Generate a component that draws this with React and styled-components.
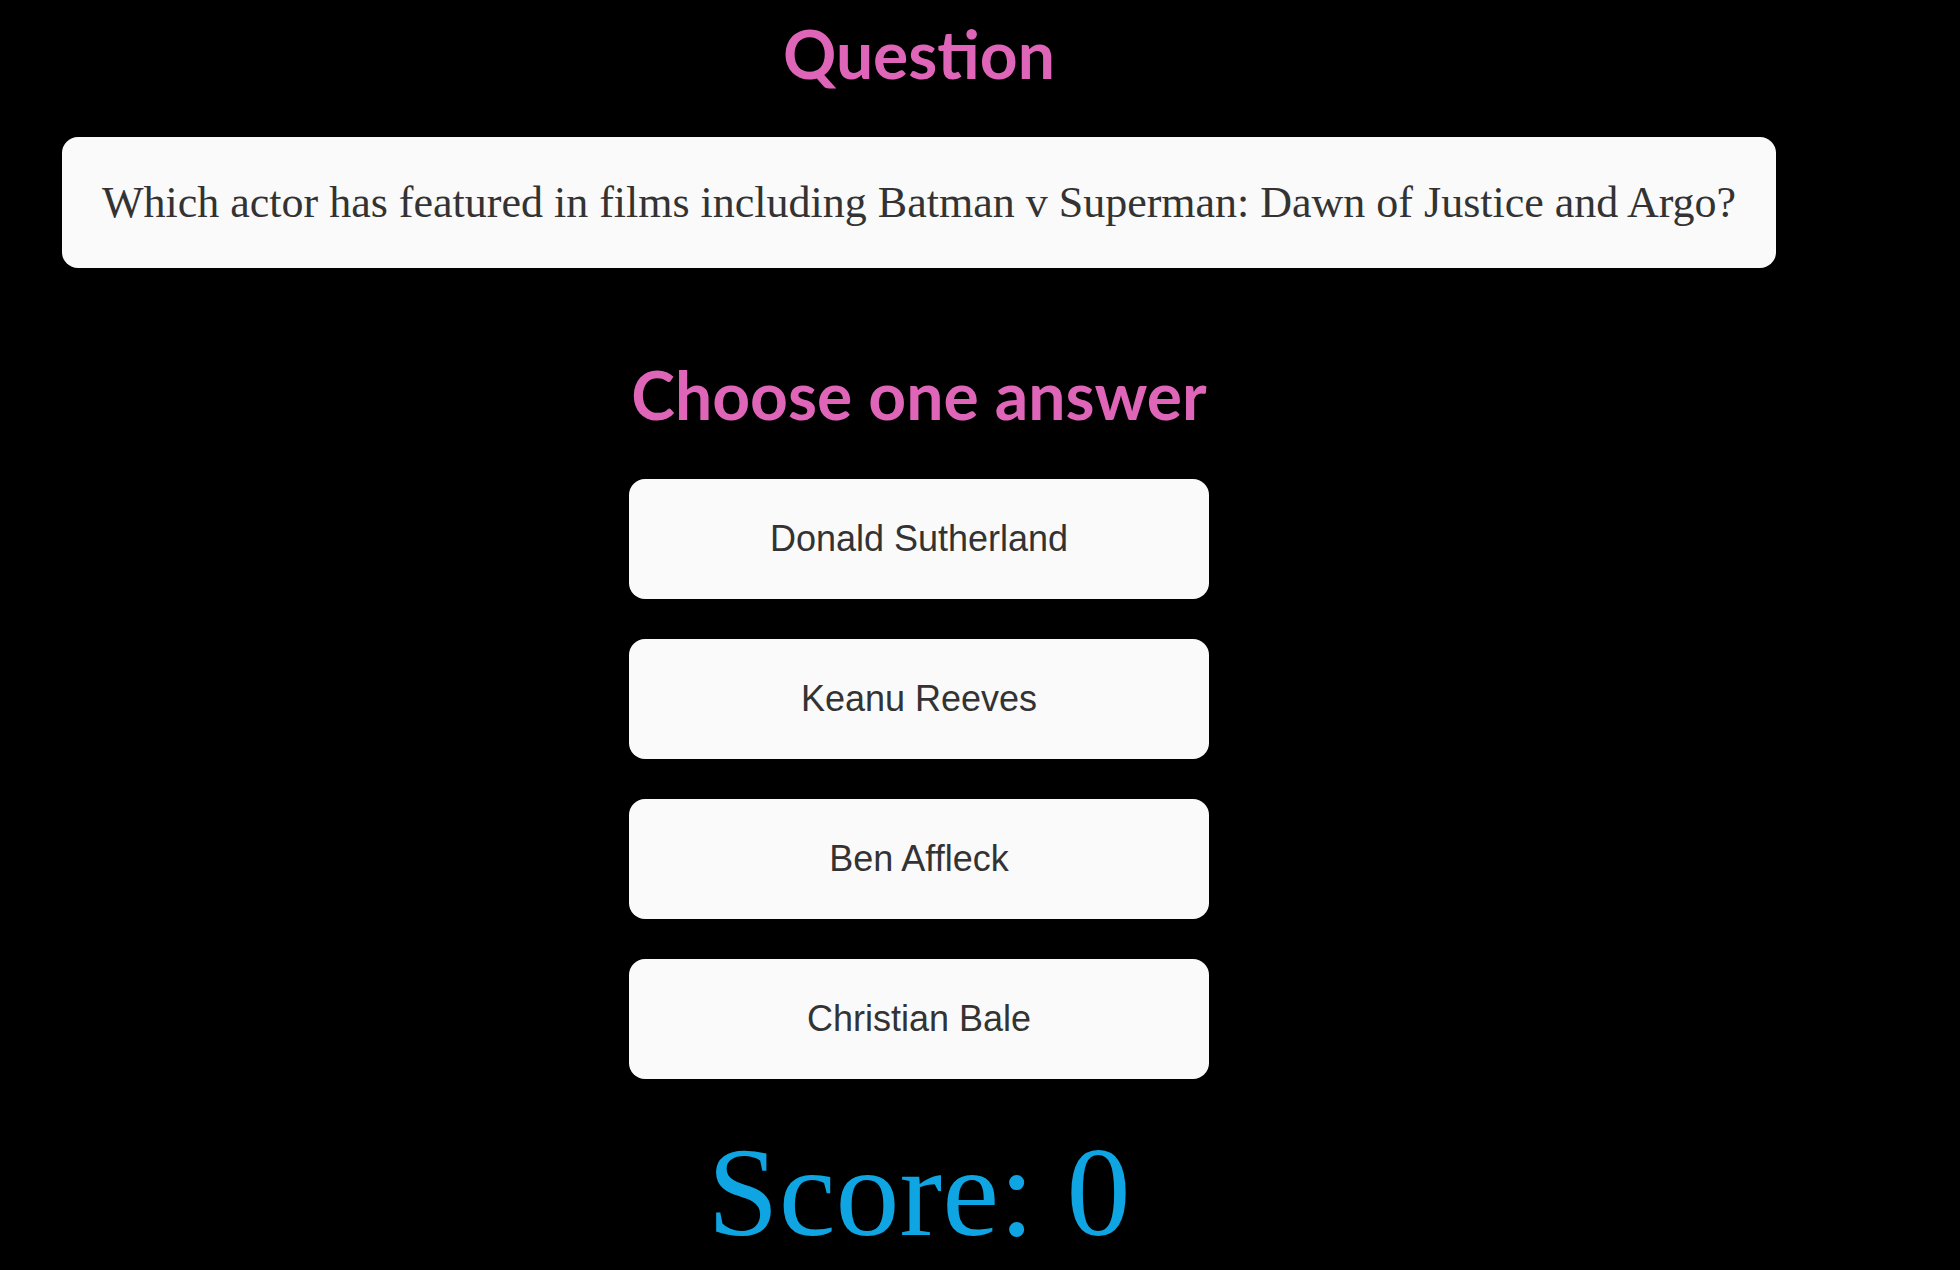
import styled, { createGlobalStyle } from "styled-components";

const GlobalStyle = createGlobalStyle`
  html, body {
    margin: 0;
    padding: 0;
    background-color: #000;
  }
`;

const Page = styled.div`
  width: 1838px;
  min-height: 1270px;
  padding: 0 62px;
  box-sizing: border-box;
  display: flex;
  flex-direction: column;
  align-items: center;
  background-color: #000;
`;

const Heading = styled.h1`
  margin: ${(props) => props.$margin};
  font-family: "Comic Sans MS", "Lato", sans-serif;
  font-weight: 700;
  font-size: 66px;
  line-height: 80px;
  color: #de65b8;
  text-align: center;
`;

const QuestionCard = styled.div`
  width: 100%;
  box-sizing: border-box;
  padding: 40px 16px;
  background-color: #fafafa;
  border-radius: 16px;
  font-family: "Liberation Serif", "Times New Roman", serif;
  font-size: 44px;
  line-height: 51px;
  color: #333;
  text-align: center;
  white-space: nowrap;
`;

const AnswerList = styled.div`
  display: flex;
  flex-direction: column;
  gap: 40px;
  width: 580px;
`;

const AnswerButton = styled.button`
  height: 120px;
  border: none;
  border-radius: 16px;
  background-color: #fafafa;
  color: #333;
  font-family: "Liberation Sans", Arial, sans-serif;
  font-size: 36px;
  display: flex;
  align-items: center;
  justify-content: center;
  cursor: pointer;
`;

const Score = styled.div`
  margin-top: 40px;
  font-family: "Liberation Serif", "Times New Roman", serif;
  font-size: 128px;
  line-height: 1.15;
  color: #0ea5e2;
`;

const answers = ["Donald Sutherland", "Keanu Reeves", "Ben Affleck", "Christian Bale"];

const App = () => {
  return (
    <>
      <GlobalStyle />
      <Page>
        <Heading $margin="14px 0 43px">Question</Heading>
        <QuestionCard>
          Which actor has featured in films including Batman v Superman: Dawn of Justice and Argo?
        </QuestionCard>
        <Heading $margin="87px 0 44px">Choose one answer</Heading>
        <AnswerList>
          {answers.map((a) => (
            <AnswerButton key={a}>{a}</AnswerButton>
          ))}
        </AnswerList>
        <Score>Score: 0</Score>
      </Page>
    </>
  );
};

export default App;
